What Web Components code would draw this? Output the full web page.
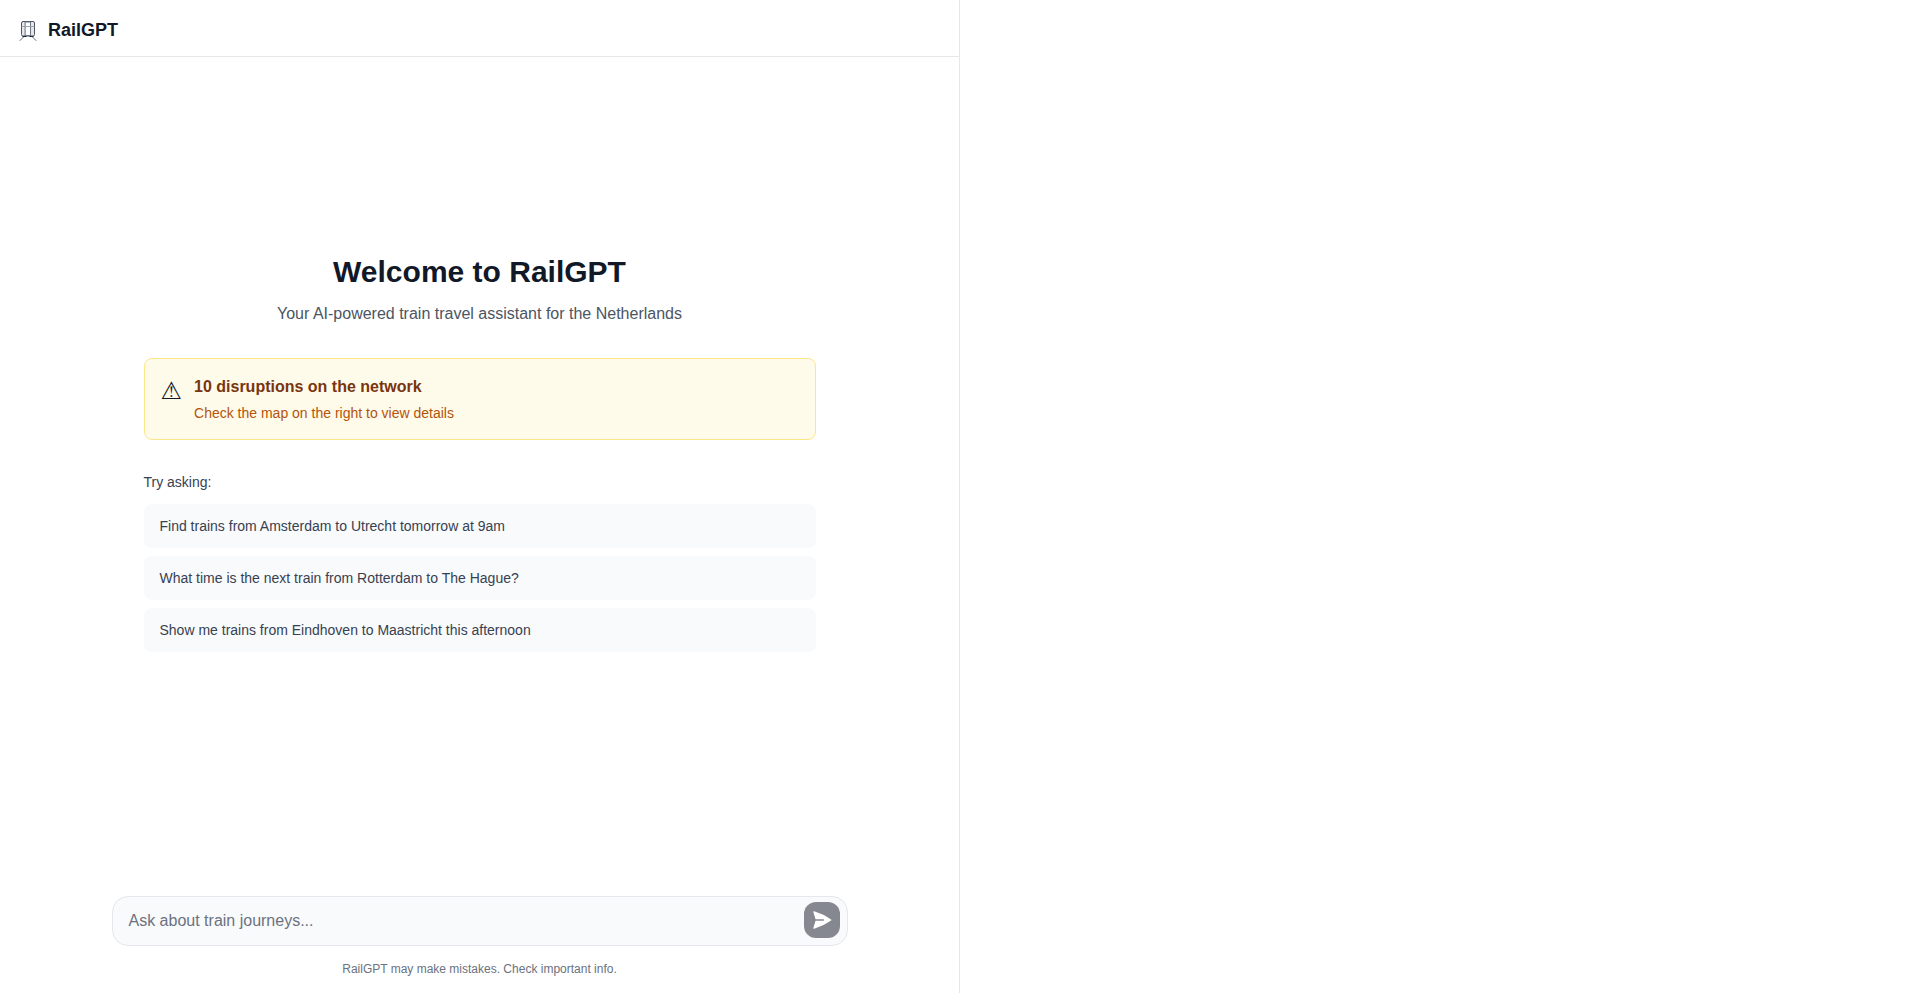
<!DOCTYPE html>
<html lang="en">
<head>
<meta charset="utf-8">
<title>RailGPT</title>
<style>
    html, body{ margin:0; height:100%; background:#fff; }
    body{ font-family:"Liberation Sans", Arial, sans-serif; color:#111827; }
</style>
</head>
<body>
<rail-app>
    <rail-chat slot="chat">
        <rail-header slot="header">RailGPT</rail-header>
        <rail-welcome slot="body">
            <rail-alert slot="alert" heading="10 disruptions on the network">Check the map on the right to view details</rail-alert>
            <rail-suggestion>Find trains from Amsterdam to Utrecht tomorrow at 9am</rail-suggestion>
            <rail-suggestion>What time is the next train from Rotterdam to The Hague?</rail-suggestion>
            <rail-suggestion>Show me trains from Eindhoven to Maastricht this afternoon</rail-suggestion>
        </rail-welcome>
        <rail-composer slot="footer"></rail-composer>
    </rail-chat>
</rail-app>
<script>
class RailApp extends HTMLElement{
    constructor(){
        super();
        this.attachShadow({mode: 'open'}).innerHTML = `
            <style>
                :host{ display:grid; grid-template-columns:960px 960px; height:100vh; overflow:hidden; }
                .map{ background:#fff; }
            </style>
            <slot name="chat"></slot>
            <div class="map"></div>
        `;
    }
}
class RailChat extends HTMLElement{
    constructor(){
        super();
        this.attachShadow({mode: 'open'}).innerHTML = `
            <style>
                :host{ display:flex; flex-direction:column; height:100%; min-height:0; border-right:1px solid #e5e7eb; box-sizing:border-box; }
                .body{ flex:1; min-height:0; display:flex; flex-direction:column; justify-content:center; align-items:center; }
            </style>
            <slot name="header"></slot>
            <div class="body"><slot name="body"></slot></div>
            <slot name="footer"></slot>
        `;
    }
}
class RailHeader extends HTMLElement{
    constructor(){
        super();
        this.attachShadow({mode: 'open'}).innerHTML = `
            <style>
                :host{ display:flex; align-items:center; gap:8px; height:57px; padding:4px 16px 0; box-sizing:border-box; border-bottom:1px solid #e5e7eb; flex:none; }
                svg{ width:24px; height:24px; flex:none; }
                span{ font-size:18px; line-height:28px; font-weight:700; color:#111827; }
            </style>
            <svg viewBox="0 0 24 24" fill="none" stroke-linecap="round" stroke-linejoin="round">
                <rect x="5.500" y="3.500" width="13" height="14.500" rx="1.500" fill="#e5e7eb" stroke="#4b5563"></rect>
                <rect x="9.500" y="4" width="5" height="13.500" fill="#fff" stroke="#6b7280"></rect>
                <path d="M6 8.500h12" stroke="#9ca3af"></path>
                <path d="M7 18.500h3M14 18.500h3" stroke="#111827"></path>
                <path d="M7.500 19 4 22.500M16.500 19l3.500 3.500" stroke="#6b7280"></path>
            </svg>
            <span><slot></slot></span>
        `;
    }
}
class RailWelcome extends HTMLElement{
    constructor(){
        super();
        this.attachShadow({mode: 'open'}).innerHTML = `
            <style>
                :host{ display:block; width:672px; padding-bottom:32px; }
                h1{ margin:0 0 12px; font-size:30px; line-height:36px; font-weight:700; color:#111827; text-align:center; }
                p{ margin:0 0 32px; font-size:16px; line-height:24px; color:#4b5563; text-align:center; }
                h2{ margin:32px 0 12px; font-size:14px; line-height:20px; font-weight:400; color:#374151; }
                .list{ display:flex; flex-direction:column; gap:8px; }
            </style>
            <h1>Welcome to RailGPT</h1>
            <p>Your AI-powered train travel assistant for the Netherlands</p>
            <slot name="alert"></slot>
            <h2>Try asking:</h2>
            <div class="list"><slot></slot></div>
        `;
    }
}
class RailAlert extends HTMLElement{
    constructor(){
        super();
        this.attachShadow({mode: 'open'}).innerHTML = `
            <style>
                :host{ display:flex; align-items:flex-start; gap:12px; padding:16px; box-sizing:border-box; height:82px; background:#fffbeb; border:1px solid #fde68a; border-radius:8px; }
                .icon{ font-family:"DejaVu Sans", sans-serif; font-size:24px; line-height:32px; color:#111827; }
                .title{ font-size:16px; line-height:24px; font-weight:700; color:#78350f; }
                .text{ margin-top:4px; font-size:14px; line-height:20px; color:#b45309; }
            </style>
            <span class="icon">⚠</span>
            <div>
                <div class="title"></div>
                <div class="text"><slot></slot></div>
            </div>
        `;
        this.shadowRoot.querySelector('.title').textContent = this.getAttribute('heading');
    }
}
class RailSuggestion extends HTMLElement{
    constructor(){
        super();
        this.attachShadow({mode: 'open'}).innerHTML = `
            <style>
                :host{ display:block; padding:12px 16px; background:#f9fafb; border-radius:8px; font-size:14px; line-height:20px; color:#374151; }
            </style>
            <slot></slot>
        `;
    }
}
class RailComposer extends HTMLElement{
    constructor(){
        super();
        this.attachShadow({mode: 'open'}).innerHTML = `
            <style>
                :host{ display:block; flex:none; padding:16px 16px 16px; width:768px; box-sizing:border-box; margin:0 auto; }
                .box{ display:flex; align-items:flex-start; height:50px; padding:5px 7px 0 16px; background:#f9fafb; border:1px solid #e5e7eb; border-radius:16px; box-sizing:border-box; }
                .input{ flex:1; margin-top:7px; font-size:16px; line-height:24px; color:#6b7280; }
                .send{ display:flex; align-items:center; justify-content:center; width:36px; height:36px; border-radius:12px; background:#858890; }
                svg{ width:22px; height:22px; }
                .note{ margin-top:15px; font-size:12px; line-height:16px; color:#6b7280; text-align:center; }
            </style>
            <div class="box">
                <div class="input">Ask about train journeys...</div>
                <div class="send">
                    <svg viewBox="0 0 24 24"><path fill="#fff" d="M3.478 2.405a.75.75 0 00-.926.94l2.432 7.905H13.500a.75.75 0 010 1.500H4.984l-2.432 7.905a.75.75 0 00.926.94 60.519 60.519 0 0018.445-8.986.75.75 0 000-1.218A60.517 60.517 0 003.478 2.405z"></path></svg>
                </div>
            </div>
            <div class="note">RailGPT may make mistakes. Check important info.</div>
        `;
    }
}
customElements.define('rail-app', RailApp);
customElements.define('rail-chat', RailChat);
customElements.define('rail-header', RailHeader);
customElements.define('rail-welcome', RailWelcome);
customElements.define('rail-alert', RailAlert);
customElements.define('rail-suggestion', RailSuggestion);
customElements.define('rail-composer', RailComposer);
</script>
</body>
</html>
